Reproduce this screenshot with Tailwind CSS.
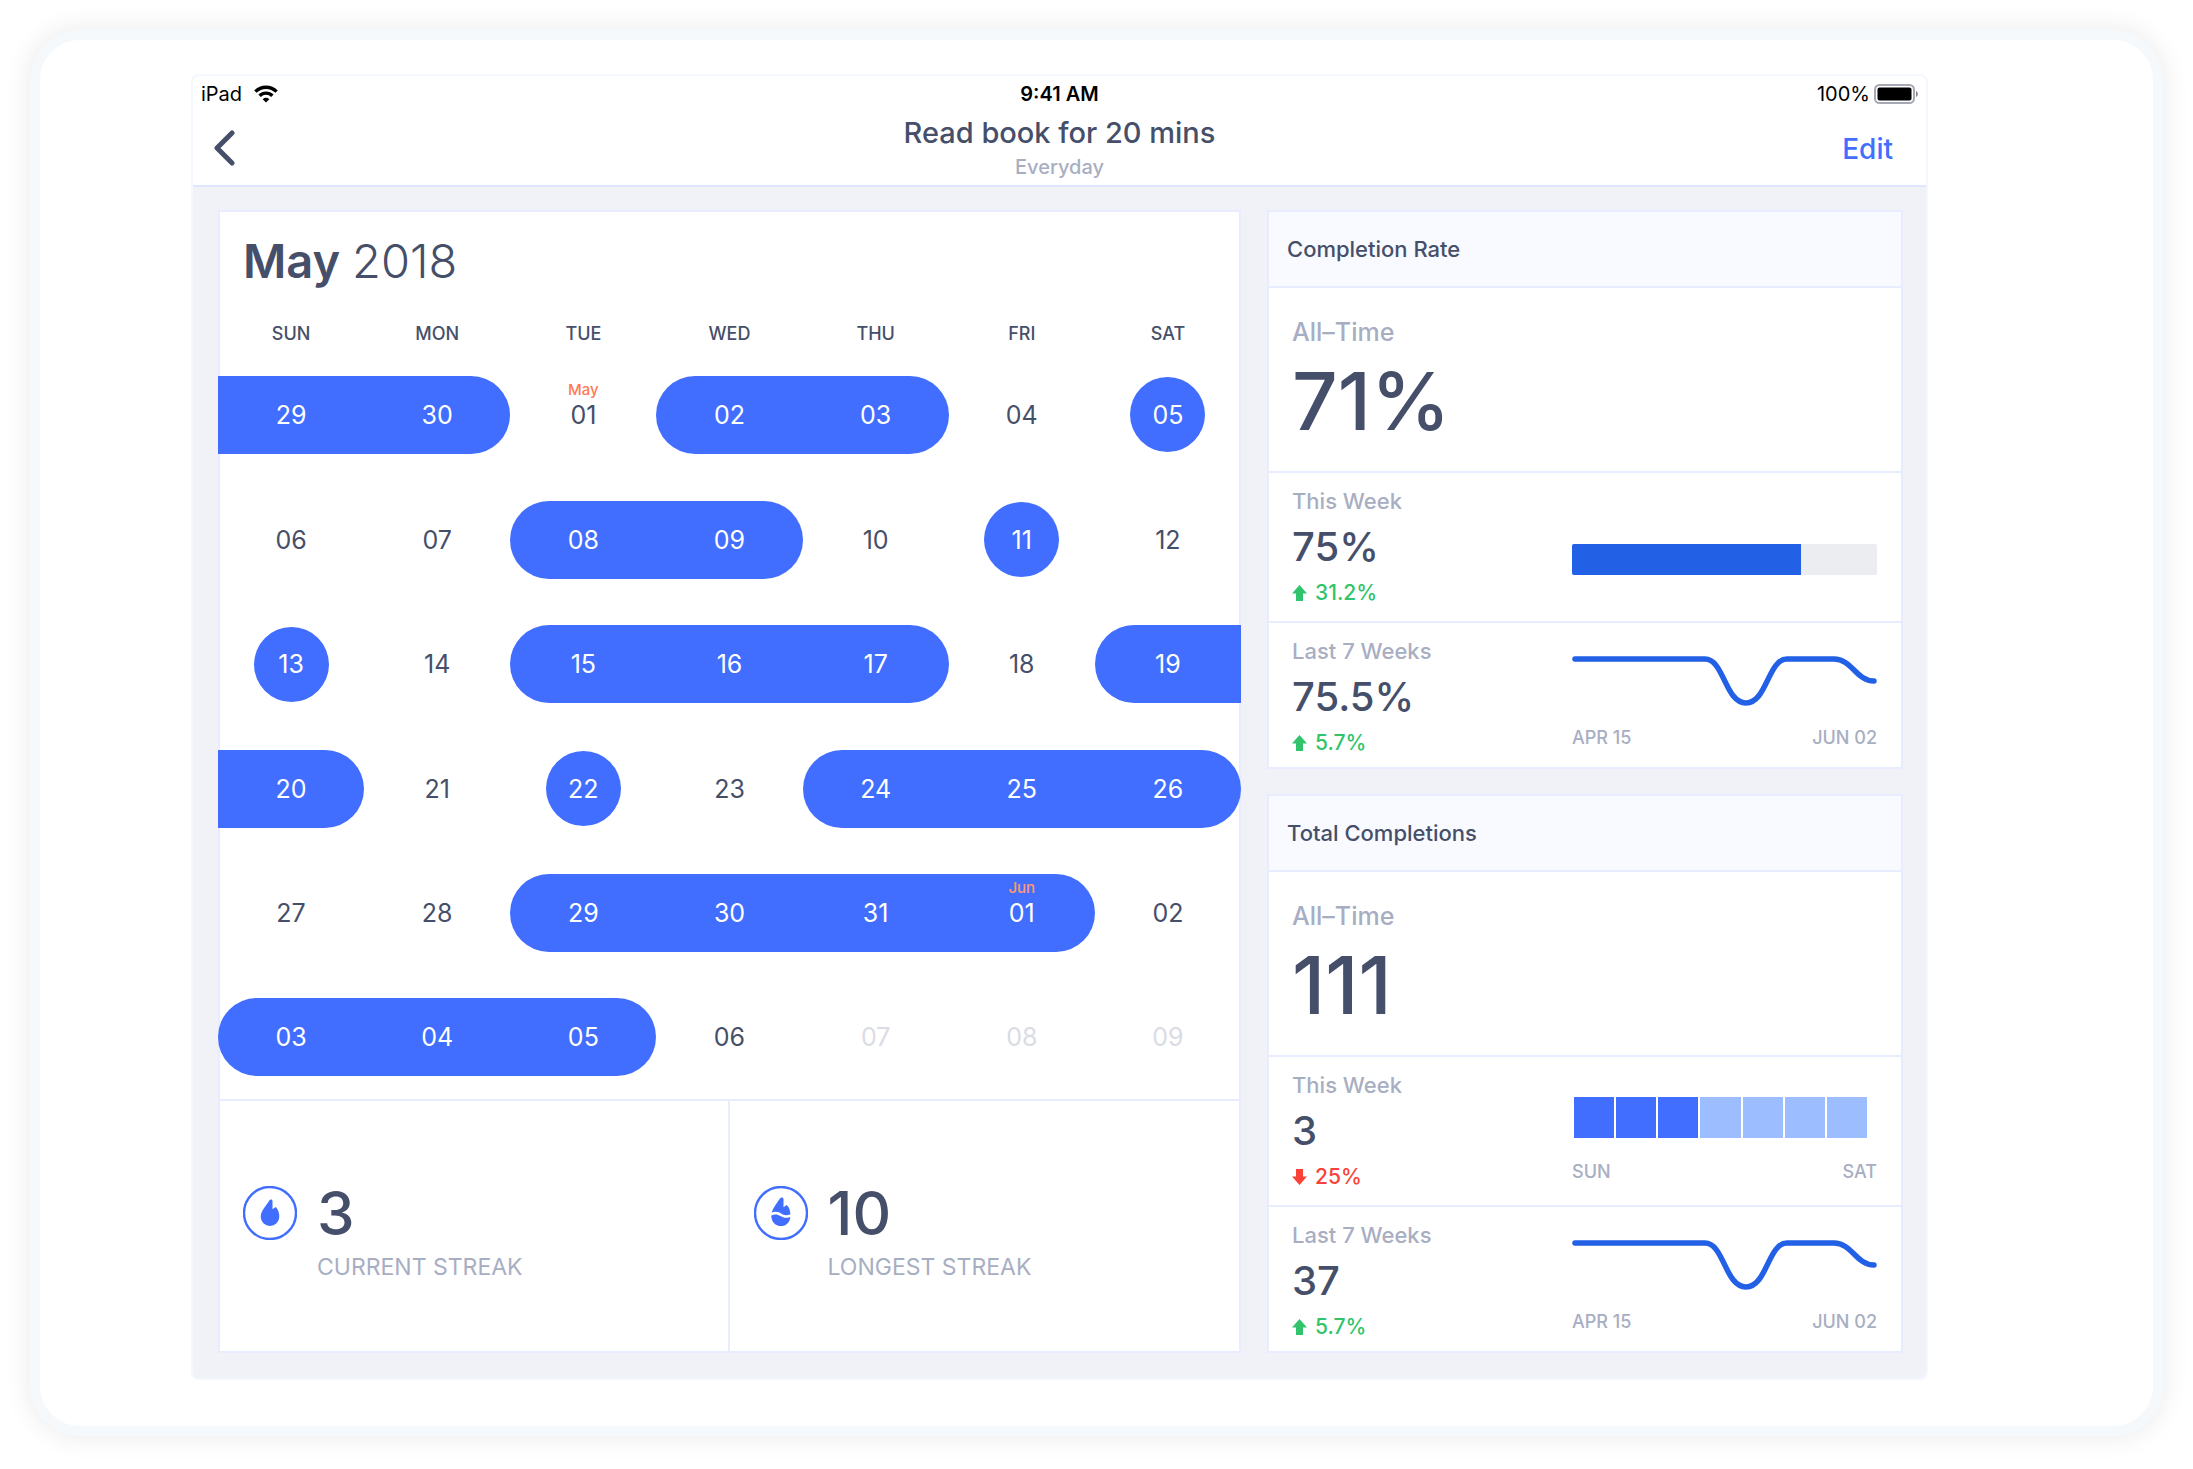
<!DOCTYPE html>
<html lang="en">
<head>
<meta charset="utf-8">
<meta name="viewport" content="width=device-width, initial-scale=1">
<title>Read book for 20 mins</title>
<script src="https://cdn.jsdelivr.net/npm/@tailwindcss/browser@4"></script>
</head>
<body class="min-h-screen bg-white p-[30px] font-[Inter,sans-serif] text-[#464f69]">
<div class="rounded-[50px] border-10 border-[#f5f9fc] bg-white pt-[34px] pr-[225px] pb-[46px] pl-[151px] shadow-[0_0_28px_rgba(0,0,0,0.09)]">
<div class="overflow-hidden rounded-lg border-2 border-[#f3f8fe] bg-[#f0f2f8]">

  <!-- Status bar and navigation -->
  <header class="border-b-2 border-[#dfe6ff] bg-white">
    <div class="grid grid-cols-3 items-center px-2 pt-1.5 text-[20px] leading-6 text-black">
      <div class="flex items-center gap-3">
        <span>iPad</span>
        <svg class="h-[18px] w-[24px]" viewBox="0 0 24 18" fill="none" stroke="#000" stroke-width="3.4"><path d="M1.4 6.6a15 15 0 0 1 21.2 0"/><path d="M5.6 10.8a9 9 0 0 1 12.8 0"/><path d="M12 17.6 8.7 14.2a4.7 4.7 0 0 1 6.6 0z" fill="#000" stroke="none"/></svg>
      </div>
      <div class="text-center font-semibold">9:41 AM</div>
      <div class="flex items-center justify-end gap-1">
        <span>100%</span>
        <svg class="h-[20px] w-[44px]" viewBox="0 0 44 20"><rect x="1" y="1" width="39" height="18" rx="4.5" fill="#fff" stroke="#a6a8b4" stroke-width="2"/><rect x="3.5" y="3.5" width="34" height="13" rx="2" fill="#000"/><path d="M42 7c2.400 1.200 2.400 4.800 0 6z" fill="#85868f"/></svg>
      </div>
    </div>
    <div class="grid grid-cols-[100px_1fr_100px] items-center pt-[9px] pb-0.5">
      <button type="button" aria-label="Back" class="ml-[20px] w-6"><svg class="h-[38px] w-[24px]" viewBox="0 0 24 38" fill="none" stroke="#464f69" stroke-width="5" stroke-linecap="round" stroke-linejoin="round"><path d="M19 3 4 18l15 15"/></svg></button>
      <div class="text-center">
        <h1 class="text-[29px] leading-9 font-medium">Read book for 20 mins</h1>
        <p class="text-[20px] leading-8 font-medium text-[#a8aec2]">Everyday</p>
      </div>
      <a href="#" class="mr-[33px] text-right text-[28px] leading-9 font-medium text-[#416eff]">Edit</a>
    </div>
  </header>

  <main class="grid grid-cols-[1023fr_636fr] gap-[26px] pt-[23px] pr-[23px] pb-[25px] pl-[25px]">

    <!-- Month calendar -->
    <section class="flex flex-col bg-white shadow-[inset_0_0_0_2px_#e7edff]">
      <h2 class="px-[25px] pt-[23px] text-[47px] leading-[56px] font-semibold">May <span class="font-light">2018</span></h2>
      <table class="mt-[25px] w-full table-fixed text-center text-[25px] [&_span]:pt-0.5">
        <thead>
          <tr class="h-[38px] text-[18px]">
            <th class="font-medium">SUN</th><th class="font-medium">MON</th><th class="font-medium">TUE</th><th class="font-medium">WED</th><th class="font-medium">THU</th><th class="font-medium">FRI</th><th class="font-medium">SAT</th>
          </tr>
        </thead>
        <tbody>
          <tr class="h-[125px]">
            <td><span class="flex h-[78px] items-center justify-center bg-[#416eff] text-white">29</span></td>
            <td><span class="flex h-[78px] items-center justify-center rounded-r-[39px] bg-[#416eff] text-white">30</span></td>
            <td><span class="relative flex h-[78px] items-center justify-center"><small class="absolute inset-x-0 top-1 text-[15px] leading-5 font-medium text-[#ff7a54]">May</small>01</span></td>
            <td><span class="flex h-[78px] items-center justify-center rounded-l-[39px] bg-[#416eff] text-white">02</span></td>
            <td><span class="flex h-[78px] items-center justify-center rounded-r-[39px] bg-[#416eff] text-white">03</span></td>
            <td><span class="block">04</span></td>
            <td><span class="mx-auto flex size-[75px] items-center justify-center rounded-full bg-[#416eff] text-white">05</span></td>
          </tr>
          <tr class="h-[125px]">
            <td><span class="block">06</span></td>
            <td><span class="block">07</span></td>
            <td><span class="flex h-[78px] items-center justify-center rounded-l-[39px] bg-[#416eff] text-white">08</span></td>
            <td><span class="flex h-[78px] items-center justify-center rounded-r-[39px] bg-[#416eff] text-white">09</span></td>
            <td><span class="block">10</span></td>
            <td><span class="mx-auto flex size-[75px] items-center justify-center rounded-full bg-[#416eff] text-white">11</span></td>
            <td><span class="block">12</span></td>
          </tr>
          <tr class="h-[124px]">
            <td><span class="mx-auto flex size-[75px] items-center justify-center rounded-full bg-[#416eff] text-white">13</span></td>
            <td><span class="block">14</span></td>
            <td><span class="flex h-[78px] items-center justify-center rounded-l-[39px] bg-[#416eff] text-white">15</span></td>
            <td><span class="flex h-[78px] items-center justify-center bg-[#416eff] text-white">16</span></td>
            <td><span class="flex h-[78px] items-center justify-center rounded-r-[39px] bg-[#416eff] text-white">17</span></td>
            <td><span class="block">18</span></td>
            <td><span class="flex h-[78px] items-center justify-center rounded-l-[39px] bg-[#416eff] text-white">19</span></td>
          </tr>
          <tr class="h-[125px]">
            <td><span class="flex h-[78px] items-center justify-center rounded-r-[39px] bg-[#416eff] text-white">20</span></td>
            <td><span class="block">21</span></td>
            <td><span class="mx-auto flex size-[75px] items-center justify-center rounded-full bg-[#416eff] text-white">22</span></td>
            <td><span class="block">23</span></td>
            <td><span class="flex h-[78px] items-center justify-center rounded-l-[39px] bg-[#416eff] text-white">24</span></td>
            <td><span class="flex h-[78px] items-center justify-center bg-[#416eff] text-white">25</span></td>
            <td><span class="flex h-[78px] items-center justify-center rounded-r-[39px] bg-[#416eff] text-white">26</span></td>
          </tr>
          <tr class="h-[124px]">
            <td><span class="block">27</span></td>
            <td><span class="block">28</span></td>
            <td><span class="flex h-[78px] items-center justify-center rounded-l-[39px] bg-[#416eff] text-white">29</span></td>
            <td><span class="flex h-[78px] items-center justify-center bg-[#416eff] text-white">30</span></td>
            <td><span class="flex h-[78px] items-center justify-center bg-[#416eff] text-white">31</span></td>
            <td><span class="relative flex h-[78px] items-center justify-center rounded-r-[39px] bg-[#416eff] text-white"><small class="absolute inset-x-0 top-1 text-[15px] leading-5 font-medium text-[#ff9a6e]">Jun</small>01</span></td>
            <td><span class="block">02</span></td>
          </tr>
          <tr class="h-[124px]">
            <td><span class="flex h-[78px] items-center justify-center rounded-l-[39px] bg-[#416eff] text-white">03</span></td>
            <td><span class="flex h-[78px] items-center justify-center bg-[#416eff] text-white">04</span></td>
            <td><span class="flex h-[78px] items-center justify-center rounded-r-[39px] bg-[#416eff] text-white">05</span></td>
            <td><span class="block">06</span></td>
            <td class="text-[#dadce5]"><span class="block">07</span></td>
            <td class="text-[#dadce5]"><span class="block">08</span></td>
            <td class="text-[#dadce5]"><span class="block">09</span></td>
          </tr>
        </tbody>
      </table>
      <div class="grid grow grid-cols-2 border-t-2 border-[#e7edff]">
        <div class="grid grid-cols-[54px_1fr] content-center items-center gap-x-[20px] border-r-2 border-[#e7edff] pt-4 pl-[25px]">
          <svg class="size-[54px]" viewBox="0 0 54 54"><circle cx="27" cy="27" r="26" fill="none" stroke="#416eff" stroke-width="2.4"/><path d="M26.300 14.500C23.500 19.500 17.700 24.500 17.700 31a9.300 9 0 0 0 18.600 0c0-3.700-1-7-3-9.400-.4-.5-.9-.5-1.400-.1l-2.400 1.700V15c0-1.700-2.300-2-3.200-.5z" fill="#416eff"/></svg>
          <div class="text-[60px] leading-[64px] font-medium">3</div>
          <div class="col-start-2 text-[23px] leading-[44px] text-[#a8aec2]">CURRENT STREAK</div>
        </div>
        <div class="grid grid-cols-[54px_1fr] content-center items-center gap-x-[20px] pt-4 pl-6">
          <svg class="size-[54px]" viewBox="0 0 54 54"><circle cx="27" cy="27" r="26" fill="none" stroke="#416eff" stroke-width="2.4"/><path d="M26 12.500C22.800 17 19 22 17.700 26.600c3.800-1.400 6.800-.8 9.800 1.200 2.900 1.900 5.600 1.700 8.900.5-.1-3.300-1.100-6.500-3.100-8.700-.4-.5-.9-.5-1.400-.1l-2.400 1.700V13c0-1.500-2.300-2.200-3.500-.5z" fill="#416eff"/><path d="M17.300 29.400c3.200-1.400 6.200-1.300 9.200.7 3.200 2.100 6.200 2.200 9.800.8-.4 5.400-4.300 9.100-9.300 9.100-5.500 0-9.700-4-9.700-10.600z" fill="#416eff"/></svg>
          <div class="text-[60px] leading-[64px] font-medium">10</div>
          <div class="col-start-2 text-[23px] leading-[44px] text-[#a8aec2]">LONGEST STREAK</div>
        </div>
      </div>
    </section>

    <div class="flex flex-col gap-[25px]">

      <!-- Completion rate -->
      <section class="border-2 border-[#e7edff] bg-white">
        <h2 class="border-b-2 border-[#e7edff] bg-[#f8faff] px-[18px] py-[21px] text-[22px] leading-8 font-medium">Completion Rate</h2>
        <div class="border-b-2 border-[#e7edff] px-[23px] pt-7 pb-[17px]">
          <p class="text-[25px] leading-8 font-medium text-[#a8aec2]">All–Time</p>
          <p class="text-[80px] leading-[106px] font-medium">71%</p>
        </div>
        <div class="grid grid-cols-[1fr_305px] border-b-2 border-[#e7edff] pt-3 pr-6 pb-3 pl-[23px]">
          <div>
            <p class="text-[22px] leading-8 font-medium text-[#a8aec2]">This Week</p>
            <p class="text-[40px] leading-[60px] font-medium">75%</p>
            <p class="flex items-center gap-2 text-[21px] leading-8 font-medium text-[#31c46c]"><svg class="h-4 w-[15px]" viewBox="0 0 15 16" fill="currentColor"><path d="M7.500 0 15 8.500h-4V16H4V8.500H0z"/></svg>31.2%</p>
          </div>
          <div class="mt-[59px] h-[31px] overflow-hidden rounded-[2px] bg-[#ecedf1]"><div class="h-full bg-[#2260e6]" style="width:75%"></div></div>
        </div>
        <div class="grid grid-cols-[1fr_305px] pt-3 pr-6 pb-2 pl-[23px]">
          <div>
            <p class="text-[22px] leading-8 font-medium text-[#a8aec2]">Last 7 Weeks</p>
            <p class="text-[40px] leading-[60px] font-medium">75.5%</p>
            <p class="flex items-center gap-2 text-[21px] leading-8 font-medium text-[#31c46c]"><svg class="h-4 w-[15px]" viewBox="0 0 15 16" fill="currentColor"><path d="M7.500 0 15 8.500h-4V16H4V8.500H0z"/></svg>5.7%</p>
          </div>
          <div class="pt-[19px]">
            <svg class="h-[54px] w-full" viewBox="0 0 305 54" fill="none" stroke="#2260e6" stroke-width="5.5" stroke-linecap="round"><path d="M3 5H133C152 5 153 49 174 49S196 5 215 5H262C280 5 284 27 302 27"/></svg>
            <div class="mt-4 flex justify-between text-[18px] leading-7 font-medium text-[#a8aec2]"><span>APR 15</span><span>JUN 02</span></div>
          </div>
        </div>
      </section>

      <!-- Total completions -->
      <section class="border-2 border-[#e7edff] bg-white">
        <h2 class="border-b-2 border-[#e7edff] bg-[#f8faff] px-[18px] py-[21px] text-[22px] leading-8 font-medium">Total Completions</h2>
        <div class="border-b-2 border-[#e7edff] px-[23px] pt-7 pb-[17px]">
          <p class="text-[25px] leading-8 font-medium text-[#a8aec2]">All–Time</p>
          <p class="text-[80px] leading-[106px] font-medium">111</p>
        </div>
        <div class="grid grid-cols-[1fr_305px] border-b-2 border-[#e7edff] pt-3 pr-6 pb-3 pl-[23px]">
          <div>
            <p class="text-[22px] leading-8 font-medium text-[#a8aec2]">This Week</p>
            <p class="text-[40px] leading-[60px] font-medium">3</p>
            <p class="flex items-center gap-2 text-[21px] leading-8 font-medium text-[#fa4238]"><svg class="h-4 w-[15px]" viewBox="0 0 15 16" fill="currentColor"><path d="M7.500 16 15 7.500h-4V0H4v7.500H0z"/></svg>25%</p>
          </div>
          <div class="pt-7">
            <div class="mr-2.5 ml-0.5 grid h-[41px] grid-cols-7 gap-0.5">
              <i class="bg-[#416eff]"></i><i class="bg-[#416eff]"></i><i class="bg-[#416eff]"></i><i class="bg-[#9cbdff]"></i><i class="bg-[#9cbdff]"></i><i class="bg-[#9cbdff]"></i><i class="bg-[#9cbdff]"></i>
            </div>
            <div class="mt-5 flex justify-between text-[18px] leading-7 font-medium text-[#a8aec2]"><span>SUN</span><span>SAT</span></div>
          </div>
        </div>
        <div class="grid grid-cols-[1fr_305px] pt-3 pr-6 pb-2 pl-[23px]">
          <div>
            <p class="text-[22px] leading-8 font-medium text-[#a8aec2]">Last 7 Weeks</p>
            <p class="text-[40px] leading-[60px] font-medium">37</p>
            <p class="flex items-center gap-2 text-[21px] leading-8 font-medium text-[#31c46c]"><svg class="h-4 w-[15px]" viewBox="0 0 15 16" fill="currentColor"><path d="M7.500 0 15 8.500h-4V16H4V8.500H0z"/></svg>5.7%</p>
          </div>
          <div class="pt-[19px]">
            <svg class="h-[54px] w-full" viewBox="0 0 305 54" fill="none" stroke="#2260e6" stroke-width="5.5" stroke-linecap="round"><path d="M3 5H133C152 5 153 49 174 49S196 5 215 5H262C280 5 284 27 302 27"/></svg>
            <div class="mt-4 flex justify-between text-[18px] leading-7 font-medium text-[#a8aec2]"><span>APR 15</span><span>JUN 02</span></div>
          </div>
        </div>
      </section>
    </div>
  </main>
</div>
</div>
</body>
</html>
